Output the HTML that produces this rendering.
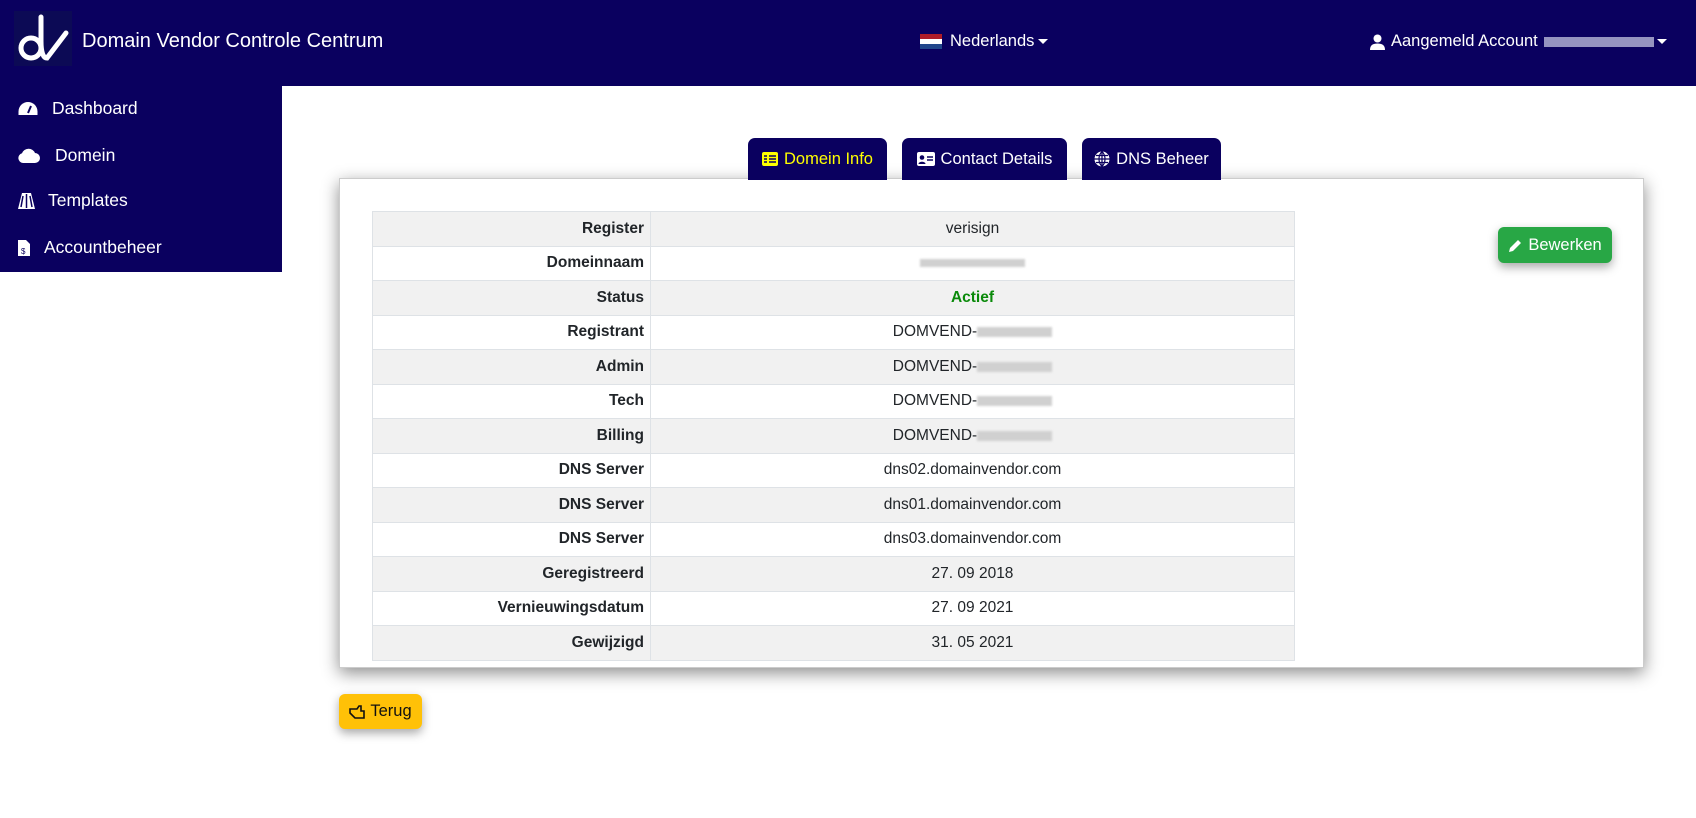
<!DOCTYPE html>
<html><head><meta charset="utf-8"><style>
*{box-sizing:border-box;margin:0;padding:0}
body{width:1696px;height:818px;background:#fff;font-family:"Liberation Sans",sans-serif;position:relative;overflow:hidden;color:#212529}
.hdr{position:absolute;left:0;top:0;width:1696px;height:86px;background:#0a005f}
.logo{position:absolute;left:14px;top:11px;width:58px;height:55px;background:#0c0a55}
.title{position:absolute;left:82px;top:30px;color:#fff;font-size:20px}
.lang{position:absolute;left:920px;top:32px;color:#fff;font-size:16.5px;display:flex;align-items:center;gap:8px}
.acct{position:absolute;left:1370px;top:32px;color:#fff;font-size:16.5px;display:flex;align-items:center;gap:6px}
.caret{display:inline-block;border-left:5px solid transparent;border-right:5px solid transparent;border-top:5px solid #fff;margin-left:-3px}
.side{position:absolute;left:0;top:86px;width:282px;height:186px;background:#0a005f}
.side div{position:absolute;color:#fff;font-size:17.5px;display:flex;align-items:center}
.tab{position:absolute;top:138px;height:42px;background:#0a005f;color:#fff;border-radius:7px 7px 0 0;font-size:16.5px;display:flex;align-items:center;justify-content:center;gap:6px}
.card{position:absolute;left:339px;top:178px;width:1305px;height:490px;background:#fff;border:1px solid #ccc;box-shadow:0 5px 16px rgba(0,0,0,.45)}
table{position:absolute;left:32px;top:32px;width:923px;border-collapse:collapse;font-size:15.5px}
td{border:1px solid #dee2e6;height:34.5px;padding:0 6px}
td:first-child{width:278px;text-align:right;font-weight:bold}
td:last-child{text-align:center}
tr:nth-child(odd){background:#f1f1f1}
.blur{display:inline-block;width:75px;height:10px;background:#d0d0d0;vertical-align:middle;filter:blur(1px)}
.btn{position:absolute;border-radius:6px;font-size:16.5px;display:flex;align-items:center;justify-content:center;gap:5px;box-shadow:0 4px 10px rgba(0,0,0,.35)}
</style></head><body>
<div class="hdr">
 <div class="logo"><svg width="58" height="55" viewBox="0 0 58 55"><circle cx="17" cy="37" r="10" fill="none" stroke="#fff" stroke-width="5"/><path d="M27 6V30Q27 47 33 47L52 22" stroke="#fff" stroke-width="5" stroke-linecap="round" fill="none"/></svg></div>
 <div class="title">Domain Vendor Controle Centrum</div>
 <div class="lang"><svg width="22" height="15"><rect width="22" height="5" fill="#ae1c28"/><rect y="5" width="22" height="5" fill="#fff"/><rect y="10" width="22" height="5" fill="#21468b"/></svg>Nederlands<span class="caret" style="margin-left:-4px"></span></div>
 <div class="acct"><svg width="15" height="16" viewBox="0 0 15 16"><circle cx="7.5" cy="4.5" r="4" fill="#fff"/><path d="M0 16C0 11 3 9.5 7.5 9.5S15 11 15 16Z" fill="#fff"/></svg>Aangemeld Account <span style="display:inline-block;width:110px;height:10px;background:#b8b8d8;opacity:.8"></span><span class="caret"></span></div>
</div>
<div class="side">
 <div style="left:18px;top:12px"><svg width="20" height="16" viewBox="0 0 20 16"><path d="M10 1A9.5 9.5 0 0 0 .5 10.5V14h19v-3.5A9.5 9.5 0 0 0 10 1Z" fill="#fff"/><path d="M10 12L13 5" stroke="#0a005f" stroke-width="2"/></svg><span style="margin-left:14px">Dashboard</span></div>
 <div style="left:18px;top:59px"><svg width="22" height="15" viewBox="0 0 22 15"><path d="M5 15A5 5 0 0 1 4 5.2 7 7 0 0 1 17 5a5 5 0 0 1 0 10Z" fill="#fff"/></svg><span style="margin-left:15px">Domein</span></div>
 <div style="left:18px;top:104px"><svg width="17" height="16" viewBox="0 0 17 16"><path d="M4 0h9l4 16H0Z" fill="#fff"/><path d="M8.5 1v14M5 3L3 14M12 3l2 11" stroke="#0a005f" stroke-width="1.5"/></svg><span style="margin-left:13px">Templates</span></div>
 <div style="left:18px;top:151px"><svg width="12" height="16" viewBox="0 0 12 16"><path d="M0 0h8l4 4v12H0Z" fill="#fff"/><text x="3" y="14" font-size="8" fill="#0a005f" font-family="Liberation Sans">$</text></svg><span style="margin-left:14px">Accountbeheer</span></div>
</div>
<div class="card">
<table>
<tr><td>Register</td><td>verisign</td></tr>
<tr><td>Domeinnaam</td><td><span class="blur" style="width:105px;height:8px"></span></td></tr>
<tr><td>Status</td><td style="color:#0a8a0a;font-weight:bold">Actief</td></tr>
<tr><td>Registrant</td><td>DOMVEND-<span class="blur"></span></td></tr>
<tr><td>Admin</td><td>DOMVEND-<span class="blur"></span></td></tr>
<tr><td>Tech</td><td>DOMVEND-<span class="blur"></span></td></tr>
<tr><td>Billing</td><td>DOMVEND-<span class="blur"></span></td></tr>
<tr><td>DNS Server</td><td>dns02.domainvendor.com</td></tr>
<tr><td>DNS Server</td><td>dns01.domainvendor.com</td></tr>
<tr><td>DNS Server</td><td>dns03.domainvendor.com</td></tr>
<tr><td>Geregistreerd</td><td>27. 09 2018</td></tr>
<tr><td>Vernieuwingsdatum</td><td>27. 09 2021</td></tr>
<tr><td>Gewijzigd</td><td>31. 05 2021</td></tr>
</table>
</div>
<div class="tab" style="left:748px;width:139px;color:#ffff00"><svg width="16" height="14"><rect width="16" height="14" rx="2" fill="#ffff00"/><path d="M2 4h3M7 4h7M2 7h3M7 7h7M2 10h3M7 10h7" stroke="#0a005f" stroke-width="1.5"/></svg>Domein Info</div>
<div class="tab" style="left:902px;width:165px"><svg width="18" height="14"><rect width="18" height="14" rx="2" fill="#fff"/><circle cx="5" cy="5.5" r="2.3" fill="#0a005f"/><path d="M1.5 12c0-3 7-3 7 0Z" fill="#0a005f"/><path d="M10 5h6M10 8h6" stroke="#0a005f" stroke-width="1.5"/></svg>Contact Details</div>
<div class="tab" style="left:1082px;width:139px"><svg width="16" height="16" viewBox="0 0 16 16"><circle cx="8" cy="8" r="7.5" fill="#fff"/><path d="M8 .5v15M.5 8h15M2 4.5h12M2 11.5h12M8 .5c-4 4-4 11 0 15M8 .5c4 4 4 11 0 15" stroke="#0a005f" stroke-width="1.2" fill="none"/></svg>DNS Beheer</div>
<div class="btn" style="left:1498px;top:227px;width:114px;height:36px;background:#28a745;color:#fff"><svg width="15" height="15" viewBox="0 0 15 15"><path d="M1 14l1-4 8-8 3 3-8 8Z" fill="#fff"/></svg>Bewerken</div>
<div class="btn" style="left:339px;top:694px;width:83px;height:35px;background:#ffc107;color:#111"><svg width="16" height="14" viewBox="0 0 16 14"><path d="M1 4h7l2-3h2v5h3v7H6L1 8Z" fill="none" stroke="#111" stroke-width="1.6"/></svg>Terug</div>
</body></html>
